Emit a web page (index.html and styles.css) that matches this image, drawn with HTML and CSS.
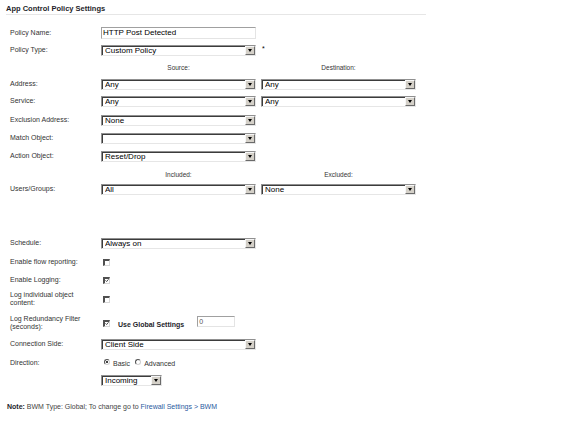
FILE: index.html
```html
<!DOCTYPE html>
<html>
<head>
<meta charset="utf-8">
<link rel="stylesheet" href="styles.css">
</head>
<body>
<div class="page">
  <div class="title">App Control Policy Settings</div>
  <div class="form">
    <div class="row h18"><div class="lbl">Policy Name:</div><div class="inp w155">HTTP Post Detected</div></div>
    <div class="row h16"><div class="lbl">Policy Type:</div><div class="sel w155"><span class="val">Custom Policy</span><span class="arr"></span></div><span class="req">*</span></div>
    <div class="row h18"><div class="lbl"></div><div class="colh">Source:</div><div class="colh">Destination:</div></div>
    <div class="row h16"><div class="lbl">Address:</div><div class="pair"><div class="sel w155"><span class="val">Any</span><span class="arr"></span></div><div class="sel w155"><span class="val">Any</span><span class="arr"></span></div></div></div>
    <div class="row h18"><div class="lbl">Service:</div><div class="pair"><div class="sel w155"><span class="val">Any</span><span class="arr"></span></div><div class="sel w155"><span class="val">Any</span><span class="arr"></span></div></div></div>
    <div class="row h20"><div class="lbl">Exclusion Address:</div><div class="sel w155"><span class="val">None</span><span class="arr"></span></div></div>
    <div class="row h16"><div class="lbl">Match Object:</div><div class="sel w155"><span class="val"></span><span class="arr"></span></div></div>
    <div class="row h20"><div class="lbl">Action Object:</div><div class="sel w155"><span class="val">Reset/Drop</span><span class="arr"></span></div></div>
    <div class="row h16"><div class="lbl"></div><div class="colh">Included:</div><div class="colh">Excluded:</div></div>
    <div class="row h14"><div class="lbl">Users/Groups:</div><div class="pair"><div class="sel w155"><span class="val">All</span><span class="arr"></span></div><div class="sel w155"><span class="val">None</span><span class="arr"></span></div></div></div>
    <div class="spacer"></div>
    <div class="row h18"><div class="lbl">Schedule:</div><div class="sel w155"><span class="val">Always on</span><span class="arr"></span></div></div>
    <div class="row h20"><div class="lbl">Enable flow reporting:</div><span class="cb"></span></div>
    <div class="row h16"><div class="lbl">Enable Logging:</div><span class="cb"><svg class="tick" viewBox="0 0 5 5" width="5" height="5"><polyline points="0.6,2.3 2,3.8 4.4,1" fill="none" stroke="#222" stroke-width="1"/></svg></span></div>
    <div class="row h22"><div class="lbl">Log individual object content:</div><span class="cb"></span></div>
    <div class="row h26"><div class="lbl">Log Redundancy Filter (seconds):</div><span class="cb"><svg class="tick" viewBox="0 0 5 5" width="5" height="5"><polyline points="0.6,2.3 2,3.8 4.4,1" fill="none" stroke="#222" stroke-width="1"/></svg></span><span class="ugs">Use Global Settings</span><div class="inp small">0</div></div>
    <div class="row h16"><div class="lbl">Connection Side:</div><div class="sel w155"><span class="val">Client Side</span><span class="arr"></span></div></div>
    <div class="row h22"><div class="lbl">Direction:</div><span class="rad on"></span><span class="rlbl">Basic</span><span class="rad"></span><span class="rlbl">Advanced</span></div>
    <div class="row h12"><div class="lbl"></div><div class="sel w61"><span class="val">Incoming</span><span class="arr"></span></div></div>
  </div>
  <div class="note"><b>Note:</b> BWM Type: Global; To change go to <span class="link">Firewall Settings &gt; BWM</span></div>
</div>
</body>
</html>
```

FILE: styles.css
```css
* { box-sizing: border-box; }
body {
  margin: 0;
  background: #fff;
  font-family: "Liberation Sans", Arial, sans-serif;
  color: #333;
}
.page { width: 576px; }
.title {
  margin-left: 6px;
  width: 420px;
  height: 15px;
  padding-top: 4px;
  line-height: 10px;
  border-bottom: 1px solid #e6e6e6;
  font-size: 7.5px;
  font-weight: bold;
  color: #1e1e2a;
}
.form { margin-top: 9px; }
.row { display: flex; align-items: center; }
.h12 { height: 12px; }
.h14 { height: 14px; }
.h16 { height: 16px; }
.h18 { height: 18px; }
.h20 { height: 20px; }
.h22 { height: 22px; }
.h26 { height: 26px; }
.spacer { height: 38px; }
.lbl {
  width: 101px;
  flex: none;
  padding: 0 8px 0 10px;
  font-size: 7px;
  line-height: 8px;
  color: #333;
}
.colh {
  width: 155px;
  margin-right: 5px;
  text-align: center;
  font-size: 6.5px;
  color: #333;
}
.pair { display: flex; gap: 5px; }
.w155 { width: 155px; }
.w61 { width: 61px; }
.sel {
  display: flex;
  align-items: center;
  height: 11px;
  background: #fff;
  border: 1px solid;
  border-color: #909090 #e6e6e6 #e6e6e6 #909090;
  box-shadow: inset 1px 1px 0 #3c3c3c;
  padding-left: 3px;
  font-size: 8px;
  line-height: 9px;
  color: #000;
}
.sel .val { flex: 1; white-space: nowrap; overflow: hidden; }
.arr {
  width: 10px;
  height: 9px;
  flex: none;
  display: flex;
  align-items: center;
  justify-content: center;
  background: #d4d0c8;
  border: 1px solid;
  border-color: #f6f6f6 #6a6a6a #6a6a6a #f6f6f6;
}
.arr::after {
  content: "";
  width: 0;
  height: 0;
  margin-top: 1px;
  border-left: 2.5px solid transparent;
  border-right: 2.5px solid transparent;
  border-top: 3px solid #000;
}
.req {
  margin-left: 6px;
  margin-bottom: 4px;
  font-size: 7px;
  color: #000;
}
.inp {
  height: 12px;
  border: 1px solid;
  border-color: #a0a0a0 #e4e4e4 #e4e4e4 #a0a0a0;
  padding-left: 1px;
  font-size: 8px;
  line-height: 10px;
  color: #000;
  white-space: nowrap;
}
.inp.small {
  width: 38px;
  height: 11px;
  margin-left: 13px;
  margin-bottom: 3px;
  font-size: 7px;
  color: #555;
}
.cb {
  width: 7px;
  height: 7px;
  margin-left: 2px;
  flex: none;
  display: flex;
  align-items: center;
  justify-content: center;
  background: #fff;
  border-style: solid;
  border-width: 2px 1px 1px 2px;
  border-color: #505050 #d8d8d8 #d8d8d8 #505050;
}
.tick { display: block; }
.ugs {
  margin-left: 8px;
  font-size: 7px;
  font-weight: bold;
  color: #1e1e2a;
  margin-top: 2px;
}
.rad {
  width: 6px;
  height: 6px;
  flex: none;
  border-radius: 50%;
  border: 1px solid;
  border-color: #505050 #d0d0d0 #d0d0d0 #505050;
  background: #fff;
  margin-left: 3px;
  margin-top: -2px;
  display: flex;
  align-items: center;
  justify-content: center;
}
.rad.on::after {
  content: "";
  width: 2px;
  height: 2px;
  border-radius: 50%;
  background: #000;
}
.rlbl {
  margin-left: 3px;
  margin-right: 2px;
  font-size: 7px;
  color: #333;
}
.note {
  margin-top: 14px;
  padding-left: 7px;
  height: 14px;
  line-height: 14px;
  font-size: 7px;
  color: #444;
}
.note b { color: #1e1e2a; }
.link { color: #2a5aa0; }
```
